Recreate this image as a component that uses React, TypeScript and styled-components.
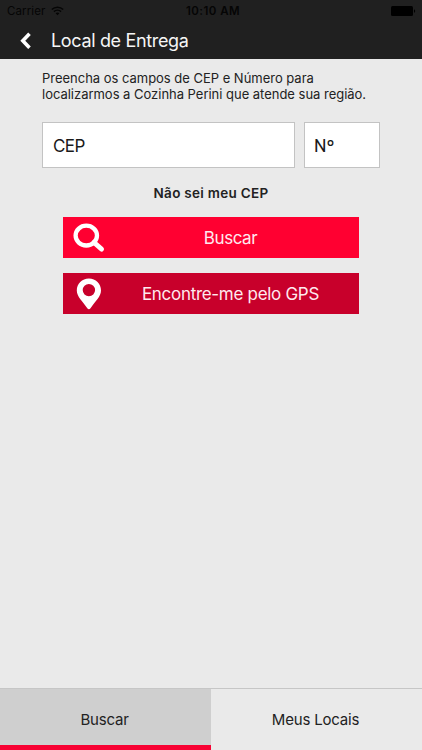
import React from "react";
import styled, { createGlobalStyle } from "styled-components";

const GlobalStyle = createGlobalStyle`
  * { box-sizing: border-box; }
  body { margin: 0; background: #eaeaea; font-family: Inter, "Liberation Sans", sans-serif; }
  button, input { font: inherit; border: 0; margin: 0; padding: 0; border-radius: 0; }
`;

const Screen = styled.div`
  width: 100%;
  height: 100vh;
  display: flex;
  flex-direction: column;
  background: #eaeaea;
  color: #222;
  overflow: hidden;
`;

const Header = styled.header`
  flex: 0 0 59px;
  background: #202020;
`;

const StatusBar = styled.div`
  height: 22px;
  display: grid;
  grid-template-columns: 1fr auto 1fr;
  align-items: center;
  padding: 0 6px 0 7px;
  color: #050505;
  font-size: 11.5px;
`;

const Carrier = styled.div`
  display: flex;
  align-items: center;
  gap: 6px;
  letter-spacing: 0.1px;
`;

const Clock = styled.div`
  font-weight: 600;
  font-size: 11.5px;
  letter-spacing: 0.45px;
  padding-left: 3px;
`;

const Battery = styled.svg`
  justify-self: end;
`;

const TitleBar = styled.div`
  height: 37px;
  display: flex;
  align-items: center;
  padding-left: 19px;
  gap: 20px;
`;

const Title = styled.h1`
  margin: 0;
  color: #f6f6f6;
  font-size: 18px;
  font-weight: 400;
  line-height: 36px;
  white-space: nowrap;
  letter-spacing: -0.34px;
`;

const Form = styled.main`
  flex: 1;
  padding: 12px 42px 0;
  display: flex;
  flex-direction: column;
`;

const Hint = styled.p`
  margin: 0;
  font-size: 13px;
  line-height: 15.5px;
  white-space: nowrap;
  letter-spacing: -0.02px;
`;

const Fields = styled.div`
  display: grid;
  grid-template-columns: 253px 76px;
  gap: 9px;
  margin-top: 20px;
`;

const Field = styled.input`
  min-width: 0;
  height: 46px;
  background: #fff;
  && { border: 1px solid #c3c3c3; padding: 1px 9px 0 10px; }
  font-size: 17px;
  letter-spacing: -0.6px;
  &::placeholder { color: #1a1a1a; opacity: 1; }
`;

const NumberField = styled(Field)`
  && { padding-left: 9px; }
  font-family: Roboto, Inter, sans-serif;
  font-size: 17.5px;
  letter-spacing: 0;
`;

const UnknownCep = styled.a`
  align-self: center;
  margin-top: 16px;
  font-size: 13.5px;
  line-height: 18px;
  font-weight: 600;
  white-space: nowrap;
  letter-spacing: 0.28px;
`;

const Actions = styled.div`
  display: grid;
  gap: 15px;
  margin: 15px 21px 0;
  width: 296px;
`;

const ActionButton = styled.button<{ $tone: string }>`
  height: 41px;
  display: grid;
  grid-template-columns: 42px 254px;
  align-items: center;
  background: ${(p) => p.$tone};
  color: #ffe9ee;
  font-size: 17px;
  white-space: nowrap;
`;

const IconSlot = styled.span<{ $end?: number }>`
  display: flex;
  justify-content: flex-end;
  padding-right: ${(p) => p.$end ?? 0}px;
`;

const Label = styled.span<{ $spacing: number }>`
  letter-spacing: ${(p) => p.$spacing}px;
  padding-right: 3px;
`;

const Tabs = styled.nav`
  flex: 0 0 62px;
  display: grid;
  grid-template-columns: 1fr 1fr;
`;

const Tab = styled.button<{ $active?: boolean }>`
  font-size: 15px;
  letter-spacing: -0.2px;
  color: #222;
  padding: 4px 2px 0 0;
  border-top: 1px solid #c6c6c6;
  border-bottom: 5px solid ${(p) => (p.$active ? "#f80233" : "transparent")};
  background: ${(p) => (p.$active ? "#cfcfcf" : "#eaeaea")};
`;

const WifiIcon = () => (
  <svg width="13" height="10" viewBox="0 0 13 10" fill="none" stroke="#050505" strokeWidth="1.5">
    <path d="M.8 3.5a8.2 8.2 0 0 1 11.4 0M2.9 5.6a5.2 5.2 0 0 1 7.2 0" />
    <path d="M6.5 9.3 4.6 7.3a2.8 2.8 0 0 1 3.8 0Z" fill="#050505" stroke="none" />
  </svg>
);

const BackIcon = () => (
  <svg width="12" height="17" viewBox="0 0 12 17" fill="none" stroke="#fff" strokeWidth="3.6">
    <path d="M10.5 1.700 3.800 8.800l6.700 7" />
  </svg>
);

const SearchIcon = () => (
  <svg width="32" height="30" viewBox="0 0 32 30" fill="none" stroke="#fff">
    <ellipse cx="13.3" cy="12.6" rx="10.7" ry="9.9" strokeWidth="4.3" />
    <path d="m20.900 19.400 7.700 6.700" strokeWidth="4.8" strokeLinecap="round" />
  </svg>
);

const PinIcon = () => (
  <svg width="26" height="32" viewBox="0 0 26 32">
    <path
      fill="#fff"
      fillRule="evenodd"
      d="M12.9.6C6 .6.8 5.800.8 12.400c0 6.200 5.600 10.500 10.500 17.800.9 1.300 2.300 1.300 3.200 0C19.400 22.900 25 18.600 25 12.400 25 5.800 19.800.6 12.900.6Zm0 5.300a6.200 6.200 0 1 1 0 12.400 6.200 6.200 0 0 1 0-12.400Z"
    />
  </svg>
);

export default function App() {
  return (
    <Screen>
      <GlobalStyle />
      <Header>
        <StatusBar>
          <Carrier>
            Carrier
            <WifiIcon />
          </Carrier>
          <Clock>10:10 AM</Clock>
          <Battery width="25" height="10" viewBox="0 0 25 10" fill="#000">
            <rect width="22" height="10" rx="1.5" />
            <path d="M23 3.200c1.600.4 1.600 3.200 0 3.600Z" />
          </Battery>
        </StatusBar>
        <TitleBar>
          <BackIcon />
          <Title>Local de Entrega</Title>
        </TitleBar>
      </Header>
      <Form>
        <Hint>
          Preencha os campos de CEP e Número para
          <br />
          localizarmos a Cozinha Perini que atende sua região.
        </Hint>
        <Fields>
          <Field placeholder="CEP" aria-label="CEP" />
          <NumberField placeholder="Nº" aria-label="Número" />
        </Fields>
        <UnknownCep>Não sei meu CEP</UnknownCep>
        <Actions>
          <ActionButton $tone="#ff0031">
            <IconSlot>
              <SearchIcon />
            </IconSlot>
            <Label $spacing={-0.45}>Buscar</Label>
          </ActionButton>
          <ActionButton $tone="#c8002b">
            <IconSlot $end={3}>
              <PinIcon />
            </IconSlot>
            <Label $spacing={-0.3}>Encontre-me pelo GPS</Label>
          </ActionButton>
        </Actions>
      </Form>
      <Tabs>
        <Tab $active>Buscar</Tab>
        <Tab>Meus Locais</Tab>
      </Tabs>
    </Screen>
  );
}
